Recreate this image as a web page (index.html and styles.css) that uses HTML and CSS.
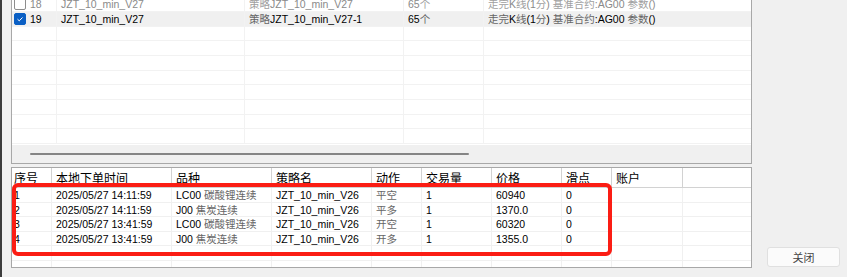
FILE: index.html
```html
<!DOCTYPE html>
<html lang="zh-CN">
<head>
<meta charset="UTF-8">
<title>策略下单记录</title>
<link rel="stylesheet" href="styles.css">
</head>
<body>
    <div class="window">
        <div class="edge"></div>
        <div class="main">
            <div class="strategies">
                <div class="list">
                    <div class="srow disabled">
                        <div class="scell idx"><span class="check"></span>18</div>
                        <div class="scell">JZT_10_min_V27</div>
                        <div class="scell"><span class="cn">策略</span>JZT_10_min_V27</div>
                        <div class="scell">65<span class="cn">个</span></div>
                        <div class="scell"><span class="cn">走完</span>K<span class="cn">线</span>(1<span class="cn">分</span>) <span class="cn">基准合约</span>:AG00 <span class="cn">参数</span>()</div>
                    </div>
                    <div class="srow selected">
                        <div class="scell idx"><span class="check on"><svg width="12" height="12" viewBox="0 0 12 12"><path d="M3 6.2 L5.1 8.2 L9 4.2" fill="none" stroke="#fff" stroke-width="1.2"/></svg></span>19</div>
                        <div class="scell">JZT_10_min_V27</div>
                        <div class="scell"><span class="cn">策略</span>JZT_10_min_V27-1</div>
                        <div class="scell">65<span class="cn">个</span></div>
                        <div class="scell"><span class="cn">走完</span>K<span class="cn">线</span>(1<span class="cn">分</span>) <span class="cn">基准合约</span>:AG00 <span class="cn">参数</span>()</div>
                    </div>
                    <div class="srow"><div class="scell"></div><div class="scell"></div><div class="scell"></div><div class="scell"></div><div class="scell"></div></div>
                    <div class="srow"><div class="scell"></div><div class="scell"></div><div class="scell"></div><div class="scell"></div><div class="scell"></div></div>
                    <div class="srow"><div class="scell"></div><div class="scell"></div><div class="scell"></div><div class="scell"></div><div class="scell"></div></div>
                    <div class="srow"><div class="scell"></div><div class="scell"></div><div class="scell"></div><div class="scell"></div><div class="scell"></div></div>
                    <div class="srow"><div class="scell"></div><div class="scell"></div><div class="scell"></div><div class="scell"></div><div class="scell"></div></div>
                    <div class="srow"><div class="scell"></div><div class="scell"></div><div class="scell"></div><div class="scell"></div><div class="scell"></div></div>
                    <div class="srow"><div class="scell"></div><div class="scell"></div><div class="scell"></div><div class="scell"></div><div class="scell"></div></div>
                    <div class="srow"><div class="scell"></div><div class="scell"></div><div class="scell"></div><div class="scell"></div><div class="scell"></div></div>
                </div>
                <div class="hscroll"><div class="thumb"></div></div>
            </div>

            <div class="orders">
                <div class="orow head">
                    <div class="ocell">序号</div>
                    <div class="ocell">本地下单时间</div>
                    <div class="ocell">品种</div>
                    <div class="ocell">策略名</div>
                    <div class="ocell">动作</div>
                    <div class="ocell">交易量</div>
                    <div class="ocell">价格</div>
                    <div class="ocell">滑点</div>
                    <div class="ocell">账户</div>
                    <div class="ocell last"></div>
                </div>
                <div class="orow">
                    <div class="ocell">1</div>
                    <div class="ocell">2025/05/27 14:11:59</div>
                    <div class="ocell">LC00 <span class="cn">碳酸锂连续</span></div>
                    <div class="ocell">JZT_10_min_V26</div>
                    <div class="ocell"><span class="cn">平空</span></div>
                    <div class="ocell">1</div>
                    <div class="ocell">60940</div>
                    <div class="ocell">0</div>
                    <div class="ocell"></div>
                    <div class="ocell last"></div>
                </div>
                <div class="orow">
                    <div class="ocell">2</div>
                    <div class="ocell">2025/05/27 14:11:59</div>
                    <div class="ocell">J00 <span class="cn">焦炭连续</span></div>
                    <div class="ocell">JZT_10_min_V26</div>
                    <div class="ocell"><span class="cn">平多</span></div>
                    <div class="ocell">1</div>
                    <div class="ocell">1370.0</div>
                    <div class="ocell">0</div>
                    <div class="ocell"></div>
                    <div class="ocell last"></div>
                </div>
                <div class="orow">
                    <div class="ocell">3</div>
                    <div class="ocell">2025/05/27 13:41:59</div>
                    <div class="ocell">LC00 <span class="cn">碳酸锂连续</span></div>
                    <div class="ocell">JZT_10_min_V26</div>
                    <div class="ocell"><span class="cn">开空</span></div>
                    <div class="ocell">1</div>
                    <div class="ocell">60320</div>
                    <div class="ocell">0</div>
                    <div class="ocell"></div>
                    <div class="ocell last"></div>
                </div>
                <div class="orow">
                    <div class="ocell">4</div>
                    <div class="ocell">2025/05/27 13:41:59</div>
                    <div class="ocell">J00 <span class="cn">焦炭连续</span></div>
                    <div class="ocell">JZT_10_min_V26</div>
                    <div class="ocell"><span class="cn">开多</span></div>
                    <div class="ocell">1</div>
                    <div class="ocell">1355.0</div>
                    <div class="ocell">0</div>
                    <div class="ocell"></div>
                    <div class="ocell last"></div>
                </div>
                <div class="orow">
                    <div class="ocell"></div><div class="ocell"></div><div class="ocell"></div><div class="ocell"></div><div class="ocell"></div>
                    <div class="ocell"></div><div class="ocell"></div><div class="ocell"></div><div class="ocell"></div><div class="ocell last"></div>
                </div>
                <div class="orow">
                    <div class="ocell"></div><div class="ocell"></div><div class="ocell"></div><div class="ocell"></div><div class="ocell"></div>
                    <div class="ocell"></div><div class="ocell"></div><div class="ocell"></div><div class="ocell"></div><div class="ocell last"></div>
                </div>
                <div class="mark"></div>
            </div>
        </div>
        <div class="side">
            <button class="close">关闭</button>
        </div>
    </div>
</body>
</html>
```

FILE: styles.css
```css
body {
    margin: 0;
    padding: 0;
    background-color: #f0f0f0;
    font-family: "Liberation Sans", "Noto Sans CJK SC", sans-serif;
    font-size: 10.5px;
    color: #000;
}
.window {
    display: flex;
    width: 847px;
    height: 277px;
    overflow: hidden;
}
.edge {
    width: 2px;
    background-color: #3c3c3c;
}
.main {
    width: 741px;
    padding-left: 9px;
}
.cn {
    font-family: "Noto Sans CJK SC", sans-serif;
    color: #666;
}

/* upper list */
.strategies {
    height: 163px;
    background-color: #fff;
    border-left: 1px solid #a8a8a8;
    border-right: 1px solid #a8a8a8;
    border-bottom: 1px solid #a8a8a8;
    display: flex;
    flex-direction: column;
    overflow: hidden;
}
.list {
    flex: 1;
    overflow: hidden;
}
.list .srow:first-child {
    margin-top: -2.67px;
}
.srow {
    display: grid;
    grid-template-columns: 45px 188px 159px 80px 1fr;
    height: 14.67px;
}
.scell {
    border-right: 1px solid #f2f2f2;
    border-bottom: 1px solid #f2f2f2;
    padding-left: 4px;
    line-height: 14px;
    white-space: nowrap;
    overflow: hidden;
}
.scell:last-child {
    border-right: none;
}
.srow.disabled {
    color: #8a8a8a;
}
.srow.disabled .cn {
    color: #a0a0a0;
}
.srow.selected {
    background-color: #f0f0f0;
}
.idx {
    display: flex;
    align-items: center;
    gap: 4px;
    padding-left: 2px;
}
.check {
    width: 10px;
    height: 10px;
    border: 1px solid #8d8d8d;
    border-radius: 2px;
    background-color: #fff;
    display: flex;
    align-items: center;
    justify-content: center;
}
.check.on {
    background-color: #0a5fc4;
    border-color: #0a5fc4;
}
.hscroll {
    height: 18px;
    background-color: #f0f0f0;
    display: flex;
    align-items: center;
}
.thumb {
    margin-left: 18px;
    width: 439px;
    height: 2px;
    border-radius: 1px;
    background-color: #858585;
}

/* lower table */
.orders {
    position: relative;
    margin-top: 3px;
    height: 99px;
    background-color: #fff;
    border: 1px solid #a8a8a8;
    overflow: hidden;
}
.orow {
    display: grid;
    grid-template-columns: 40px 120px 100px 100px 50px 70px 70px 50px 71px 1fr;
    height: 14.5px;
}
.ocell {
    border-right: 1px solid #f0f0f0;
    border-bottom: 1px solid #f0f0f0;
    padding-left: 4px;
    line-height: 14px;
    white-space: nowrap;
    overflow: hidden;
}
.ocell:first-child {
    padding-left: 2px;
}
.ocell.last {
    border-right: none;
}
.orow.head {
    height: 20px;
}
.orow.head .ocell {
    font-family: "Noto Sans CJK SC", sans-serif;
    font-size: 12px;
    line-height: 19px;
    border-right-color: #d2d2d2;
    border-bottom-color: #d2d2d2;
}
.mark {
    position: absolute;
    left: 0;
    top: 15px;
    width: 592px;
    height: 65px;
    border: 4px solid #fb1d14;
    border-radius: 6px;
}

/* right side */
.side {
    flex: 1;
    display: flex;
    align-items: flex-end;
    padding: 0 0 10px 15px;
}
.close {
    width: 73px;
    height: 20px;
    background-color: #fbfbfb;
    border: 1px solid #e0e0e0;
    border-radius: 3px;
    font-family: "Noto Sans CJK SC", sans-serif;
    font-size: 11px;
    color: #444;
    padding: 0;
}
```
